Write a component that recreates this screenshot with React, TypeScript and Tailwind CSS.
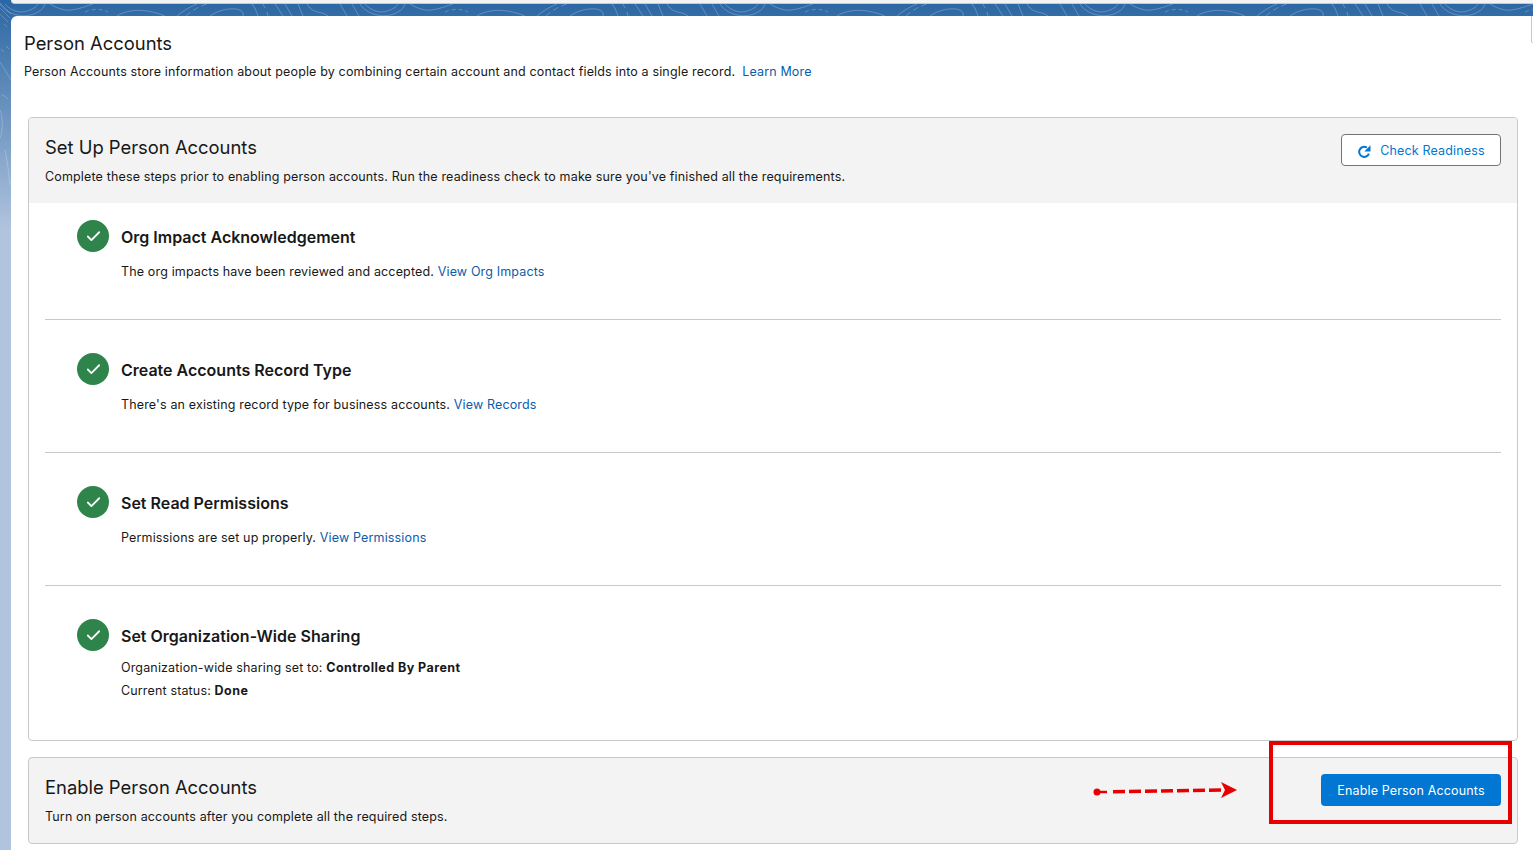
import { Check } from "lucide-react";
import type { ReactNode } from "react";

function Step({ title, children }: { title: string; children: ReactNode }) {
  return (
    <div className="flex gap-3">
      <div className="flex size-8 shrink-0 items-center justify-center rounded-full bg-[#2e844a]">
        <Check className="size-[17px] text-white" strokeWidth={2.5} />
      </div>
      <div className="min-w-0">
        <h3 className="pt-[7px] text-base leading-5 font-semibold tracking-normal text-[#181818]">
          {title}
        </h3>
        {children}
      </div>
    </div>
  );
}

function Link({ children }: { children: ReactNode }) {
  return <a className="text-[#0b5cab]">{children}</a>;
}

// contour lines of the header texture, repeats every 360px
function TopPattern() {
  return (
    <svg className="absolute left-0 top-0" width="1533" height="16">
      <defs>
        <pattern id="contours" width="360" height="16" patternUnits="userSpaceOnUse">
          <g fill="none" stroke="#ffffff" strokeOpacity="0.24" strokeWidth="1">
            <path d="M50 4 C58 9 66 11 72 10 C80 9 86 6 93 4" />
            <path d="M85 12 C92 9 100 8 108 12" strokeDasharray="4 3" />
            <path d="M117 16 C128 9 145 8 165 16" />
            <path d="M177 16 C184 10 190 7 197 4" />
            <path d="M186 16 C192 10 200 6 207 4" strokeDasharray="6 3" />
            <path d="M210 16 C218 10 232 7 240 10 C244 12 243 14 243 16" />
            <path d="M252 4 C255 8 257 12 258 16" />
            <path d="M263 4 L265 8 M267 12 L268 16" />
            <path d="M275 4 L283 16" />
            <path d="M285 4 L292 16" />
            <path d="M298 4 L303 16" />
            <path d="M307 4 C310 10 316 12 322 13 C325 14 327 15 328 16" />
            <path d="M340 4 L347 16" />
            <path d="M352 4 L359 16" />
            <path d="M5 4 C12 12 22 14 30 10 C35 8 37 6 38 4" />
            <path d="M0 4 C6 14 24 20 38 12 C42 10 44 7 45 4" />
          </g>
        </pattern>
      </defs>
      <rect y="4" width="1533" height="12" fill="url(#contours)" />
    </svg>
  );
}

function LeftPattern() {
  return (
    <svg className="absolute left-0 top-0" width="11" height="240">
      <g fill="none" stroke="#ffffff" strokeOpacity="0.22" strokeWidth="1">
        <path d="M0 3 L11 14" />
        <path d="M0 8 L10 18" />
        <path d="M0 14 L8 22" />
        <path d="M4 24 L7 27" />
        <path d="M1 49 L4 52" />
        <path d="M6 46 L9 49" />
        <path d="M0 62 L11 80" />
        <path d="M2 95 C5 96 7 98 8 99" />
        <path d="M0 110 C3 116 3 132 0 138" />
        <path d="M5 150 C8 165 9 175 10 185" />
      </g>
    </svg>
  );
}

export default function App() {
  return (
    <div className="relative h-[850px] overflow-hidden bg-[linear-gradient(180deg,#2a66a3_0px,#b0c4de_230px)] font-['Inter',sans-serif] text-[12.5px] tracking-[0.15px] text-[#181818]">
      <TopPattern />
      <LeftPattern />
      <div className="relative ml-[11px] h-1 rounded-bl-sm border-b border-[#c9c9c9] bg-[#f3f3f3]" />
      <div className="relative ml-[11px] mt-3 h-[840px] rounded-tl-md bg-white pt-[13px]">
        <h1 className="ml-[13px] text-[18.4px] leading-7 tracking-normal text-[#181818]">
          Person Accounts
        </h1>
        <p className="ml-[13px] mt-[5px] leading-5">
          Person Accounts store information about people by combining certain
          account and contact fields into a single record.
          <span className="ml-[7px] text-[#0b5cab]">Learn More</span>
        </p>

        <section className="ml-[17px] mr-[15px] mt-[35px] h-[624px] rounded-[4px] border border-[#c9c9c9]">
          <div className="flex h-[85px] items-start justify-between rounded-t-[4px] bg-[#f3f3f3] px-4 pt-[15px]">
            <div>
              <h2 className="text-[18.4px] leading-7 tracking-normal">
                Set Up Person Accounts
              </h2>
              <p className="mt-[6px] leading-5">
                Complete these steps prior to enabling person accounts. Run the
                readiness check to make sure you've finished all the
                requirements.
              </p>
            </div>
            <button className="mt-px flex h-8 w-40 items-center justify-center gap-[9px] rounded-[4px] border border-[#747474] bg-white pt-[2px] text-[#0176d3]">
              <svg width="14" height="14" viewBox="0 0 14 14">
                <path
                  d="M11.9 9.6 A5 5 0 1 1 9.8 3.6"
                  fill="none"
                  stroke="#0176d3"
                  strokeWidth="2"
                />
                <path d="M13.5 1.2 V7.4 H7.3 Z" fill="#0176d3" />
              </svg>
              Check Readiness
            </button>
          </div>
          <div className="px-4">
            <div className="h-[117px] border-b border-[#c9c9c9] pl-8 pt-[17px]">
              <Step title="Org Impact Acknowledgement">
                <p className="mt-[15px] leading-5">
                  The org impacts have been reviewed and accepted.{" "}
                  <Link>View Org Impacts</Link>
                </p>
              </Step>
            </div>
            <div className="h-[133px] border-b border-[#c9c9c9] pl-8 pt-[33px]">
              <Step title="Create Accounts Record Type">
                <p className="mt-[15px] leading-5">
                  There's an existing record type for business accounts.{" "}
                  <Link>View Records</Link>
                </p>
              </Step>
            </div>
            <div className="h-[133px] border-b border-[#c9c9c9] pl-8 pt-[33px]">
              <Step title="Set Read Permissions">
                <p className="mt-[15px] leading-5">
                  Permissions are set up properly. <Link>View Permissions</Link>
                </p>
              </Step>
            </div>
            <div className="pl-8 pt-[33px]">
              <Step title="Set Organization-Wide Sharing">
                <p className="mt-[10px] leading-[23px]">
                  Organization-wide sharing set to:{" "}
                  <strong className="font-bold tracking-[0.45px]">Controlled By Parent</strong>
                </p>
                <p className="leading-[23px]">
                  Current status: <strong className="font-bold tracking-[0.45px]">Done</strong>
                </p>
              </Step>
            </div>
          </div>
        </section>

        <section className="ml-[17px] mr-[15px] mt-4 flex h-[87px] items-start justify-between rounded-[4px] border border-[#c9c9c9] bg-[#f3f3f3] px-4 pt-[15px]">
          <div>
            <h2 className="text-[18.4px] leading-7 tracking-normal">
              Enable Person Accounts
            </h2>
            <p className="mt-[6px] leading-5">
              Turn on person accounts after you complete all the required steps.
            </p>
          </div>
          <button className="mt-px flex h-8 w-[180px] items-center justify-center rounded-[4px] bg-[#0176d3] pt-[2px] text-white">
            Enable Person Accounts
          </button>
        </section>
      </div>

      <div className="absolute right-0 top-[16px] h-[27px] w-[2px] rounded-bl-sm border-b border-l border-[#c9c9c9] bg-white" />

      <div className="absolute left-[1269px] top-[741px] h-[83px] w-[243px] border-[4.5px] border-[#e60000]" />
      <svg
        className="absolute left-[1090px] top-[780px]"
        width="150"
        height="22"
        viewBox="0 0 150 22"
      >
        <circle cx="7" cy="12" r="3.5" fill="#e60000" />
        <path d="M7 12 L17 12" stroke="#e60000" strokeWidth="2.5" />
        <path
          d="M23 11.8 L133 10"
          stroke="#e60000"
          strokeWidth="3.5"
          strokeDasharray="12 4"
          fill="none"
        />
        <path d="M131 2 L147 10 L131 18 L135 10 Z" fill="#e60000" />
      </svg>
    </div>
  );
}
